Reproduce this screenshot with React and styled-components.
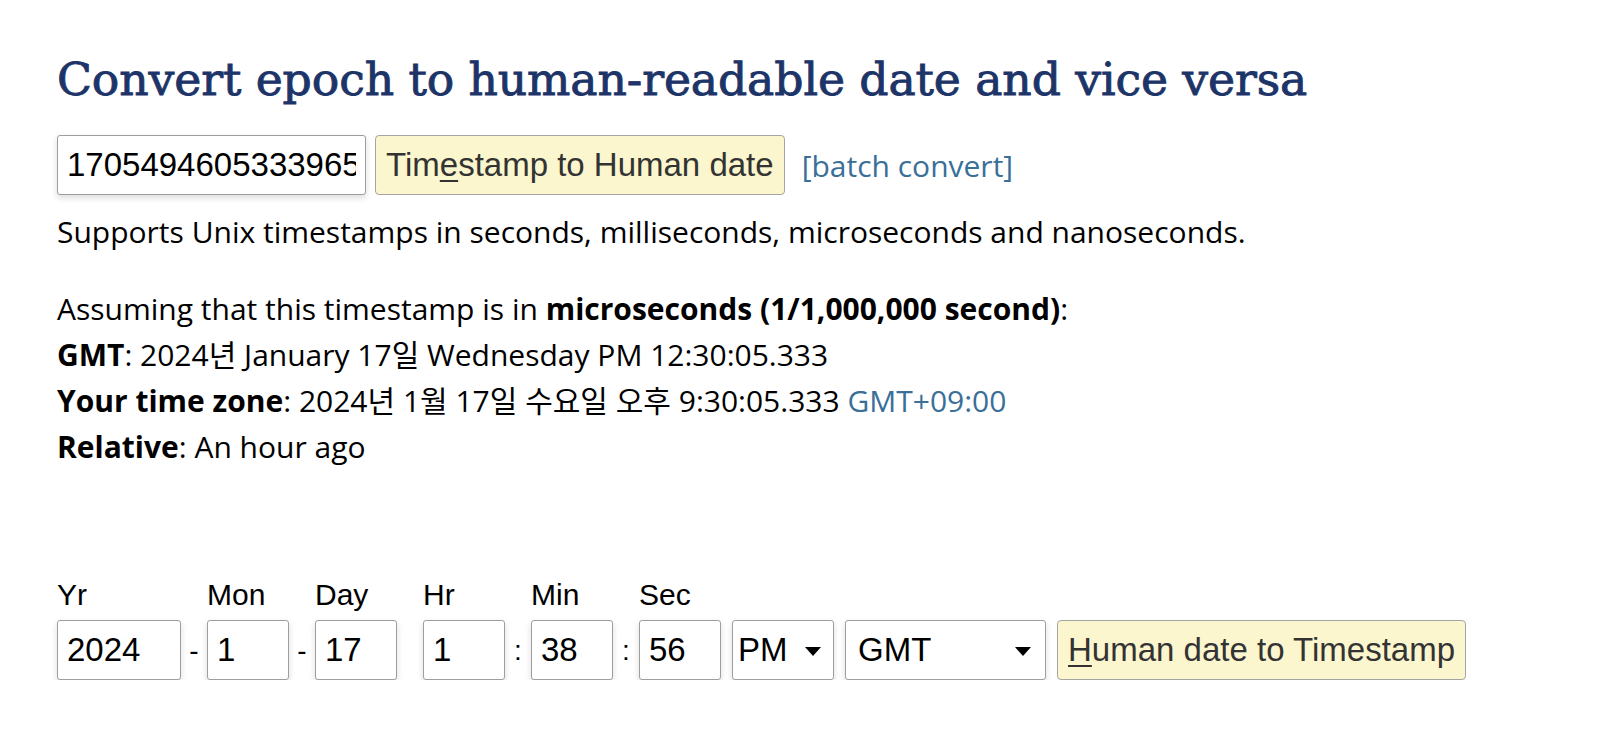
import React from 'react';
import styled, { createGlobalStyle } from 'styled-components';

const GlobalStyle = createGlobalStyle`
  html, body {
    margin: 0;
    padding: 0;
    background: #fff;
  }
  body {
    font-family: "Open Sans", "Noto Sans CJK KR", sans-serif;
    color: #000;
  }
`;

const Page = styled.main`
  padding: 45px 0 0 57px;
`;

const Title = styled.h1`
  margin: 0;
  font-family: "DejaVu Serif", "Liberation Serif", serif;
  font-weight: 400;
  font-size: 45.7px;
  line-height: 70px;
  letter-spacing: -0.1px;
  color: #1d3468;
  -webkit-text-stroke: 0.9px #1d3468;
`;

const ConvertRow = styled.div`
  display: flex;
  align-items: center;
  margin-top: 20px;
`;

const TextInput = styled.input`
  box-sizing: border-box;
  width: ${(p) => p.$width || 82}px;
  height: 60px;
  padding: 0 9px;
  border: 1px solid #9e9e9e;
  border-radius: 3px;
  background: #fff;
  box-shadow: 0 3px 6px rgba(0, 0, 0, 0.14);
  font-family: "Liberation Sans", Arial, sans-serif;
  font-size: 33px;
  color: #000;
  outline: none;
`;

const ActionButton = styled.button`
  box-sizing: border-box;
  height: 60px;
  margin-left: ${(p) => p.$gap || 0}px;
  padding: 0 10px;
  border: 1px solid #a5a5a5;
  border-radius: 4px;
  background: #fbf6cd;
  font-family: "Liberation Sans", Arial, sans-serif;
  font-size: 33px;
  color: #333;
  cursor: pointer;

  u {
    text-decoration-thickness: 2px;
    text-underline-offset: 4px;
  }
`;

const Link = styled.a`
  color: #3a6f98;
  text-decoration: none;
  font-size: 30px;
  margin-left: ${(p) => p.$gap || 0}px;
`;

const Note = styled.p`
  margin: 14px 0 0;
  font-size: 30px;
  line-height: 46px;
`;

const Result = styled.div`
  margin-top: 31px;
  font-size: 30px;
  line-height: 46px;

  b {
    font-weight: 700;
  }
`;

const DateForm = styled.div`
  display: flex;
  align-items: flex-end;
  margin-top: 108px;
`;

const Field = styled.label`
  display: flex;
  flex-direction: column;
`;

const FieldLabel = styled.span`
  font-family: "Liberation Sans", Arial, sans-serif;
  font-size: 30px;
  line-height: 34px;
  margin-bottom: 8px;
`;

const Sep = styled.span`
  width: 26px;
  height: 60px;
  line-height: 62px;
  text-align: center;
  font-family: "Liberation Sans", Arial, sans-serif;
  font-size: 28px;
`;

const SelectBox = styled.div`
  box-sizing: border-box;
  display: flex;
  align-items: center;
  justify-content: space-between;
  width: ${(p) => p.$width}px;
  height: 60px;
  margin-left: 11px;
  padding: 0 ${(p) => p.$padRight}px 0 ${(p) => p.$padLeft}px;
  border: 1px solid #9e9e9e;
  border-radius: 3px;
  background: #fff;
  box-shadow: 0 3px 6px rgba(0, 0, 0, 0.14);
  font-family: "Liberation Sans", Arial, sans-serif;
  font-size: 33px;
  color: #000;
`;

const Caret = styled.span`
  width: 0;
  height: 0;
  border-left: 8px solid transparent;
  border-right: 8px solid transparent;
  border-top: 9px solid #000;
  margin-top: 2px;
`;

const fields = [
  { label: 'Yr', value: '2024', width: 124, sep: '-' },
  { label: 'Mon', value: '1', sep: '-' },
  { label: 'Day', value: '17', sep: '' },
  { label: 'Hr', value: '1', sep: ':' },
  { label: 'Min', value: '38', sep: ':' },
  { label: 'Sec', value: '56' },
];

export default function App() {
  return (
    <>
      <GlobalStyle />
      <Page>
        <Title>Convert epoch to human-readable date and vice versa</Title>

        <ConvertRow>
          <TextInput $width={309} defaultValue="1705494605333965" />
          <ActionButton $gap={9}>
            Tim<u>e</u>stamp to Human date
          </ActionButton>
          <Link href="#" $gap={17}>[batch convert]</Link>
        </ConvertRow>

        <Note>Supports Unix timestamps in seconds, milliseconds, microseconds and nanoseconds.</Note>

        <Result>
          <div>
            Assuming that this timestamp is in <b>microseconds (1/1,000,000 second)</b>:
          </div>
          <div>
            <b>GMT</b>: 2024년 January 17일 Wednesday PM 12:30:05.333
          </div>
          <div>
            <b>Your time zone</b>: 2024년 1월 17일 수요일 오후 9:30:05.333{' '}
            <Link as="span">GMT+09:00</Link>
          </div>
          <div>
            <b>Relative</b>: An hour ago
          </div>
        </Result>

        <DateForm>
          {fields.map((f) => (
            <React.Fragment key={f.label}>
              <Field>
                <FieldLabel>{f.label}</FieldLabel>
                <TextInput $width={f.width} defaultValue={f.value} />
              </Field>
              {f.sep !== undefined && <Sep>{f.sep}</Sep>}
            </React.Fragment>
          ))}
          <SelectBox $width={102} $padLeft={5} $padRight={12}>
            PM
            <Caret />
          </SelectBox>
          <SelectBox $width={201} $padLeft={12} $padRight={14}>
            GMT
            <Caret />
          </SelectBox>
          <ActionButton $gap={11}>
            <u>H</u>uman date to Timestamp
          </ActionButton>
        </DateForm>
      </Page>
    </>
  );
}
